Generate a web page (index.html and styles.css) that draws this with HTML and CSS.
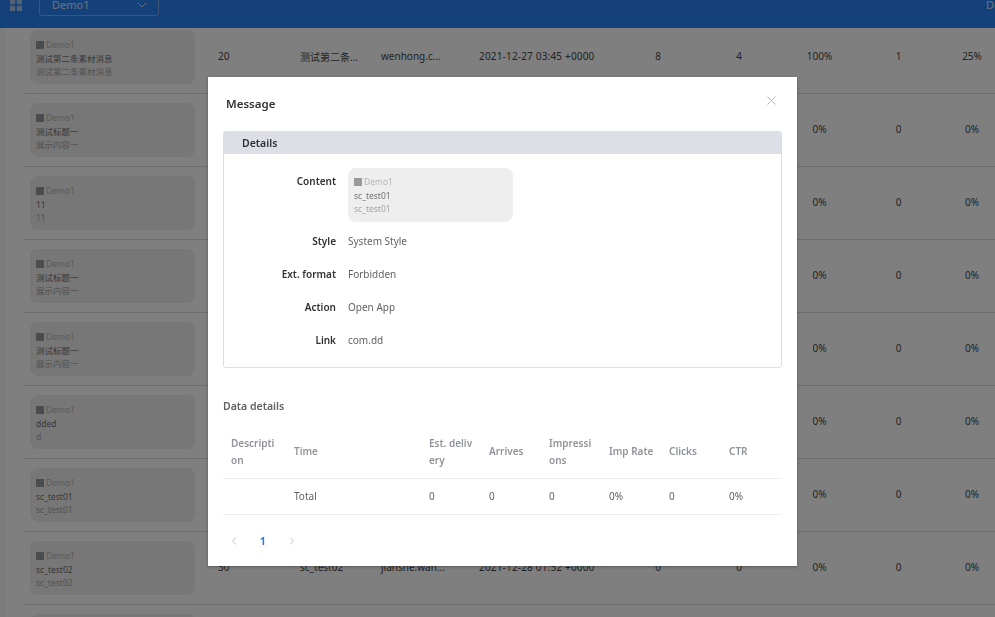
FILE: index.html
```html
<!DOCTYPE html>
<html lang="en">
<head>
<meta charset="utf-8">
<title>Message</title>
<link rel="stylesheet" href="styles.css">
</head>
<body>
<div class="page">
  <header class="topbar">
    <svg class="apps" width="12" height="12" viewBox="0 0 12 12"><path d="M0 0h5.200v5.200H0zM6.800 0H12v5.200H6.800zM0 6.800h5.200V12H0zM6.800 6.800H12V12H6.800z" fill="#a9c4ea"/></svg>
    <div class="select"><span>Demo1</span><svg width="10" height="6" viewBox="0 0 10 6"><path d="M.7.7 5 5l4.300-4.300" fill="none" stroke="#d0e0f5" stroke-width="1"/></svg></div>
    <span class="user">Demo</span>
  </header>
  <div class="shell">
    <aside class="rail"></aside>
    <main class="rows">
      <div class="row">
        <div class="card"><div class="brand"><i></i>Demo1</div><div class="t1">测试第二条素材消息</div><div class="t2">测试第二条素材消息</div></div>
        <span>20</span><span>测试第二条...</span><span>wenhong.c...</span><span class="date">2021-12-27 03:45 +0000</span>
        <span class="c">8</span><span class="c">4</span><span class="c">100%</span><span class="c">1</span><span class="c">25%</span>
      </div>
      <div class="row">
        <div class="card"><div class="brand"><i></i>Demo1</div><div class="t1">测试标题一</div><div class="t2">展示内容一</div></div>
        <span></span><span></span><span></span><span></span><span class="c"></span><span class="c"></span><span class="c">0%</span><span class="c">0</span><span class="c">0%</span>
      </div>
      <div class="row">
        <div class="card"><div class="brand"><i></i>Demo1</div><div class="t1">11</div><div class="t2">11</div></div>
        <span></span><span></span><span></span><span></span><span class="c"></span><span class="c"></span><span class="c">0%</span><span class="c">0</span><span class="c">0%</span>
      </div>
      <div class="row">
        <div class="card"><div class="brand"><i></i>Demo1</div><div class="t1">测试标题一</div><div class="t2">展示内容一</div></div>
        <span></span><span></span><span></span><span></span><span class="c"></span><span class="c"></span><span class="c">0%</span><span class="c">0</span><span class="c">0%</span>
      </div>
      <div class="row">
        <div class="card"><div class="brand"><i></i>Demo1</div><div class="t1">测试标题一</div><div class="t2">展示内容一</div></div>
        <span></span><span></span><span></span><span></span><span class="c"></span><span class="c"></span><span class="c">0%</span><span class="c">0</span><span class="c">0%</span>
      </div>
      <div class="row">
        <div class="card"><div class="brand"><i></i>Demo1</div><div class="t1">dded</div><div class="t2">d</div></div>
        <span></span><span></span><span></span><span></span><span class="c"></span><span class="c"></span><span class="c">0%</span><span class="c">0</span><span class="c">0%</span>
      </div>
      <div class="row">
        <div class="card"><div class="brand"><i></i>Demo1</div><div class="t1">sc_test01</div><div class="t2">sc_test01</div></div>
        <span></span><span></span><span></span><span></span><span class="c"></span><span class="c"></span><span class="c">0%</span><span class="c">0</span><span class="c">0%</span>
      </div>
      <div class="row">
        <div class="card"><div class="brand"><i></i>Demo1</div><div class="t1">sc_test02</div><div class="t2">sc_test02</div></div>
        <span>30</span><span>sc_test02</span><span>jianshe.wan...</span><span class="date">2021-12-28 01:52 +0000</span>
        <span class="c">0</span><span class="c">0</span><span class="c">0%</span><span class="c">0</span><span class="c">0%</span>
      </div>
      <div class="row">
        <div class="card"></div>
      </div>
    </main>
  </div>
</div>

<div class="overlay">
  <section class="modal">
    <div class="modal-head">
      <h2>Message</h2>
      <svg class="close" width="9" height="9" viewBox="0 0 9 9"><path d="M.5.5l8 8M8.500.5l-8 8" stroke="#b4b7bd" stroke-width="1" fill="none"/></svg>
    </div>
    <div class="details">
      <h3>Details</h3>
      <div class="form">
        <div class="item item-tall"><label>Content</label>
          <div class="card"><div class="brand"><i></i>Demo1</div><div class="t1">sc_test01</div><div class="t2">sc_test01</div></div>
        </div>
        <div class="item"><label>Style</label><span>System Style</span></div>
        <div class="item"><label>Ext. format</label><span>Forbidden</span></div>
        <div class="item"><label>Action</label><span>Open App</span></div>
        <div class="item"><label>Link</label><span>com.dd</span></div>
      </div>
    </div>
    <h4>Data details</h4>
    <table class="data">
      <colgroup><col class="w63"><col class="w135"><col class="w60"><col class="w60"><col class="w60"><col class="w60"><col class="w60"><col class="w61"></colgroup>
      <thead><tr><th>Description</th><th>Time</th><th>Est. delivery</th><th>Arrives</th><th>Impressions</th><th class="nowrap">Imp Rate</th><th>Clicks</th><th>CTR</th></tr></thead>
      <tbody><tr><td></td><td>Total</td><td>0</td><td>0</td><td>0</td><td>0%</td><td>0</td><td>0%</td></tr></tbody>
    </table>
    <nav class="pager">
      <svg width="6" height="8" viewBox="0 0 6 8"><path d="M5 .5 1.500 4 5 7.500" fill="none" stroke="#c0c4cc"/></svg>
      <b>1</b>
      <svg width="6" height="8" viewBox="0 0 6 8"><path d="M1 .5 4.500 4 1 7.500" fill="none" stroke="#c0c4cc"/></svg>
    </nav>
  </section>
</div>
</body>
</html>
```

FILE: styles.css
```css
* { box-sizing: border-box; }
html, body { margin: 0; height: 100%; overflow: hidden; }
body {
  font-family: "Noto Sans", "Noto Sans CJK SC", sans-serif;
  font-size: 10px;
  color: #303133;
  background: #fff;
}
.page { margin-top: -19px; }

.topbar {
  position: relative;
  z-index: 1;
  height: 47px;
  padding-left: 10px;
  display: flex;
  align-items: center;
  background: #2a82f4;
  color: #d5e4f8;
  white-space: nowrap;
  overflow: hidden;
}
.apps { flex: none; }
.select {
  flex: none;
  width: 120px;
  height: 22px;
  margin-left: 17px;
  padding: 0 11px 0 12px;
  display: flex;
  align-items: center;
  justify-content: space-between;
  border: 1px solid #7aa9ea;
  border-radius: 3px;
  font-size: 11px;
}
.user { flex: none; margin-left: 827px; font-size: 11px; }

.shell { display: flex; margin-top: -7px; }
.rail { width: 5px; flex: none; background: #f4f8fc; }
.rows { flex: 1; min-width: 0; background: #fff; padding-left: 18px; }
.row {
  height: 73px;
  display: grid;
  grid-template-columns: 195px 82px 81px 98px 139px 80px 82px 79px 79px 68px;
  align-items: center;
  border-bottom: 1px solid #dcdcdc;
  font-size: 10px;
  color: #45474a;
  white-space: nowrap;
}
.row > span { margin-bottom: 2px; }
.row .card { margin-left: 7px; }
.date { letter-spacing: .18px; }
.c { text-align: center; }

.card {
  width: 165px;
  height: 54px;
  padding: 8px 6px;
  border-radius: 8px;
  background: #eee;
  font-size: 8.500px;
  line-height: 13px;
}
.brand { display: flex; align-items: center; color: #b5b5b5; margin-bottom: 1px; }
.brand i { width: 8px; height: 8px; margin-right: 2px; background: #999; }
.t1 { color: #707275; }
.t2 { color: #a5a5a5; }

.overlay {
  position: fixed;
  inset: 0;
  z-index: 2;
  background: rgba(0, 0, 0, .5);
}
.modal {
  width: 589px;
  height: 489px;
  margin: 77px 0 0 208px;
  padding: 0 15px;
  background: #fff;
  box-shadow: 0 1px 3px rgba(0, 0, 0, .3);
}
.modal-head {
  height: 54px;
  padding: 0 6px 1px 3px;
  display: flex;
  align-items: center;
  justify-content: space-between;
}
.modal-head h2 { margin: 0; font-size: 11.500px; font-weight: 600; color: #303133; }
.close { margin-top: -6px; }

.details { border: 1px solid #dcdfe6; border-radius: 3px; height: 237px; }
.details h3 {
  margin: 0;
  height: 22px;
  padding-left: 18px;
  background: #dcdfe6;
  font-size: 10.500px;
  font-weight: 600;
  line-height: 22px;
}
.form { padding-top: 14px; }
.item {
  display: flex;
  height: 33px;
  padding-bottom: 2px;
  align-items: center;
  font-size: 10px;
  color: #606266;
}
.item label {
  width: 112px;
  margin-right: 12px;
  text-align: right;
  font-weight: 600;
  color: #303133;
}
.item-tall { height: 57px; padding-bottom: 0; align-items: flex-start; }
.item-tall label { line-height: 26px; }
.item .card { padding-top: 7px; }

h4 {
  margin: 30px 0 0;
  font-size: 10.500px;
  font-weight: 600;
  line-height: 16px;
  color: #606266;
}
.data {
  width: 559px;
  margin-top: 11px;
  border-collapse: collapse;
  table-layout: fixed;
  font-size: 10px;
  line-height: 17px;
  color: #606266;
}
.w63 { width: 63px; }
.w135 { width: 135px; }
.w60 { width: 60px; }
.w61 { width: 61px; }
.data th {
  height: 53px;
  padding: 1px 8px 0;
  text-align: left;
  font-weight: 600;
  color: #909399;
  word-break: break-all;
  border-bottom: 1px solid #ebeef5;
}
.data th.nowrap { white-space: nowrap; word-break: normal; }
.data td {
  height: 36px;
  padding: 0 8px;
  border-bottom: 1px solid #ebeef5;
}
.pager {
  display: flex;
  align-items: center;
  gap: 23px;
  margin-top: 19px;
  padding-left: 8px;
}
.pager b { font-size: 10px; color: #2a7ae2; }
```
